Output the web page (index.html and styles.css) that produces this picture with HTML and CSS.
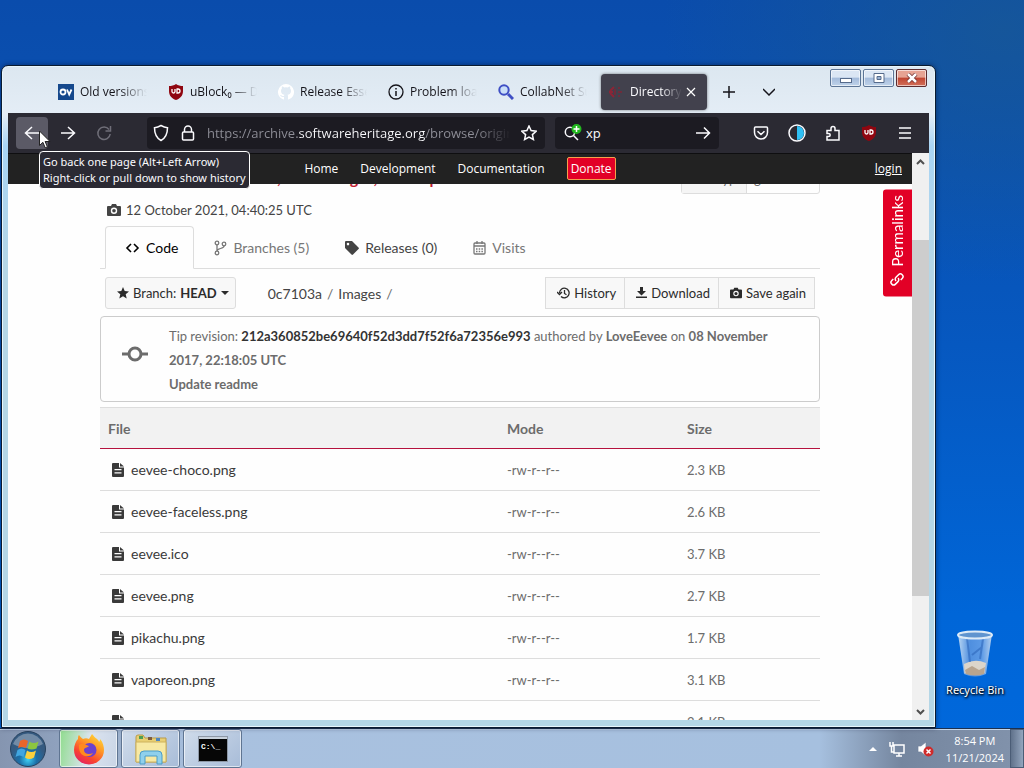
FILE: index.html
```html
<!DOCTYPE html>
<html lang="en">
<head>
    <meta charset="UTF-8">
    <meta name="viewport" content="width=device-width, initial-scale=1.0">
    <title>Directory - Software Heritage archive</title>
    <link rel="stylesheet" href="styles.css">
</head>
<body>
    <!-- Shared icons -->
    <svg class="sprite" aria-hidden="true">
        <symbol id="file" viewBox="0 0 12 14">
            <path fill="currentColor" fill-rule="evenodd" d="M1 0h6v4.500h5V13a1 1 0 0 1-1 1H1a1 1 0 0 1-1-1V1a1 1 0 0 1 1-1zm1.500 6v1.200h7V6zm0 3.200v1.200h7V9.200z"/>
            <path fill="currentColor" d="M8 0l4 3.600H8z"/>
        </symbol>
        <symbol id="camera" viewBox="0 0 14 12">
            <path fill="currentColor" fill-rule="evenodd" d="M1 2h3l1-2h4l1 2h3a1 1 0 0 1 1 1v8a1 1 0 0 1-1 1H1a1 1 0 0 1-1-1V3a1 1 0 0 1 1-1zm6 1.500a3.200 3.200 0 1 0 0 6.400 3.200 3.200 0 0 0 0-6.400z"/>
            <circle cx="7" cy="6.700" r="1.800" fill="currentColor"/>
        </symbol>
        <symbol id="shield" viewBox="0 0 16 16">
            <path fill="#8f0610" d="M8 0c2 1.500 4.500 2 7 2v5c0 5-3 7.500-7 9-4-1.500-7-4-7-9V2c2.500 0 5-.5 7-2z"/>
            <path fill="none" stroke="#fff" stroke-width="1.300" d="M4 5v2.500a1.500 1.500 0 0 0 3 0V5M9 5v4h1a2 2 0 0 0 0-4H8.500"/>
        </symbol>
    </svg>

    <div class="desktop">
        <!-- Browser window -->
        <div class="window">
            <div class="titlebar">
                <div class="tabs">
                    <div class="tab">
                        <svg width="16" height="16" viewBox="0 0 16 16"><rect width="16" height="16" fill="#15488c"/><circle cx="5" cy="8" r="2.500" fill="none" stroke="#fff" stroke-width="1.800"/><path d="M9 5.500l2.200 5 2.300-5" fill="none" stroke="#fff" stroke-width="1.800"/></svg>
                        <span>Old versions of Windows</span>
                    </div>
                    <div class="tab">
                        <svg width="16" height="16"><use href="#shield"/></svg>
                        <span>uBlock₀ — Dashboard</span>
                    </div>
                    <div class="tab">
                        <svg width="16" height="16" viewBox="0 0 16 16"><path fill="#fff" d="M8 0a8 8 0 0 0-2.500 15.600c.4 0 .5-.2.5-.4V13c-3 .5-3.500-1.500-4-2 1.500-.4 2 1.500 4 1 .1-.6.300-1 .5-1.200C4.500 10.500 3 9.500 3 7c0-1 .3-1.800.9-2.400-.2-.6-.1-1.500.1-2 1 0 1.500.5 2.200.9a8 8 0 0 1 3.600 0C10.500 3 11.200 2.600 12 2.600c.3.6.3 1.400.1 2 .6.600.9 1.400.9 2.400 0 2.500-1.500 3.500-3.500 3.800.5.500.5 1.200.5 1.800v2.600c0 .2.100.5.500.4A8 8 0 0 0 8 0z"/></svg>
                        <span>Release Essentials</span>
                    </div>
                    <div class="tab">
                        <svg width="16" height="16" viewBox="0 0 16 16" fill="none" stroke="#15141a"><circle cx="8" cy="8" r="7" stroke-width="1.300"/><path d="M8 7v5M8 4v1.600" stroke-width="1.500"/></svg>
                        <span>Problem loading page</span>
                    </div>
                    <div class="tab">
                        <svg width="16" height="16" viewBox="0 0 16 16" fill="none" stroke="#3f4fc4"><circle cx="6" cy="6" r="4.700" fill="#c9def8" stroke-width="2"/><path d="M10 10l5 5" stroke-width="3"/></svg>
                        <span>CollabNet Subversion</span>
                    </div>
                    <div class="tab active">
                        <svg width="16" height="16" viewBox="0 0 16 16" fill="none" stroke="#8c2536" stroke-width="2"><path d="M6 3L2 7M5 8H1M6 13l-4-4"/><path d="M11 3v2M10 8h4M11 11v2M7 5v6" stroke="#6e2c3c"/></svg>
                        <span>Directory - Images</span>
                        <button class="close-tab" aria-label="Close tab"><svg width="10" height="10" viewBox="0 0 10 10" stroke="#fff" stroke-width="1.200"><path d="M1 1l8 8M9 1l-8 8"/></svg></button>
                    </div>
                </div>
                <button class="tab-button" aria-label="New tab"><svg width="12" height="12" viewBox="0 0 12 12" stroke="#15141a" stroke-width="1.500"><path d="M6 0v12M0 6h12"/></svg></button>
                <button class="tab-button" aria-label="List all tabs"><svg width="12" height="12" viewBox="0 0 12 12" fill="none" stroke="#15141a" stroke-width="1.500"><path d="M0 3l6 6 6-6"/></svg></button>
                <div class="window-controls">
                    <button aria-label="Minimize"><svg width="12" height="10" viewBox="0 0 12 10"><rect x=".5" y="5.500" width="11" height="4" fill="#fff" stroke="#566b8c"/></svg></button>
                    <button aria-label="Maximize"><svg width="12" height="10" viewBox="0 0 12 10"><path d="M1 .5h10v9H1z" fill="#fff" stroke="#566b8c"/><path d="M4 3.500h4v3H4z" fill="#9bb3d4" stroke="#566b8c"/></svg></button>
                    <button class="close" aria-label="Close"><svg width="12" height="10" viewBox="0 0 12 10" fill="none"><path d="M2 1l8 8M10 1L2 9" stroke="#6b2a2a" stroke-width="4"/><path d="M2 1l8 8M10 1L2 9" stroke="#fff" stroke-width="2.500"/></svg></button>
                </div>
            </div>

            <div class="toolbar">
                <button class="tool back" aria-label="Back"><svg width="16" height="16" viewBox="0 0 16 16"><path d="M15 8H1.500M8 2L1.500 8 8 14"/></svg></button>
                <button class="tool" aria-label="Forward"><svg width="16" height="16" viewBox="0 0 16 16"><path d="M1 8h13.500M8 2l6.500 6L8 14"/></svg></button>
                <button class="tool disabled" aria-label="Reload"><svg width="16" height="16" viewBox="0 0 16 16"><path d="M13 4.500A6.200 6.200 0 1 0 14.200 9M14.500 1v5h-5"/></svg></button>
                <div class="field url">
                    <svg width="16" height="18" viewBox="0 0 16 18"><path d="M8 1.500c2 1.200 4 2 6.500 2.200 0 6-1.500 10-6.500 12.800C3 13.700 1.500 9.700 1.500 3.700 4 3.500 6 2.700 8 1.500z"/></svg>
                    <svg width="14" height="16" viewBox="0 0 14 16"><rect x="1.500" y="7" width="11" height="8" rx="1"/><path d="M3.500 7V4.500a3.500 3.500 0 0 1 7 0V7"/></svg>
                    <input type="text" class="url-input" aria-label="Address" value="https://archive.softwareheritage.org/browse/origin/directory/">
                    <svg width="16" height="16" viewBox="0 0 16 16"><path d="M8 1l2.100 4.600 5 .6-3.700 3.400 1 4.900L8 12l-4.400 2.500 1-4.900L.9 6.200l5-.6z"/></svg>
                </div>
                <div class="field search">
                    <svg width="18" height="18" viewBox="0 0 18 18"><circle cx="6" cy="8" r="4.700"/><path d="M9.500 11.500L14 16"/><circle cx="12.500" cy="5" r="5" fill="#22b81e" stroke="none"/><path d="M12.500 2v6M9.500 5h6" stroke="#fff"/></svg>
                    <input type="text" aria-label="Search" value="xp">
                    <svg width="16" height="16" viewBox="0 0 16 16"><path d="M1 8h13.500M9 2.500L14.500 8 9 13.500"/></svg>
                </div>
                <button class="tool" aria-label="Pocket"><svg width="16" height="16" viewBox="0 0 16 16"><path d="M2.500 2h11c.6 0 1 .4 1 1v4.500a6.500 6.500 0 0 1-13 0V3c0-.6.400-1 1-1zM4.500 6.200L8 9.500l3.500-3.300"/></svg></button>
                <button class="tool" aria-label="Dark mode"><svg width="18" height="18" viewBox="0 0 18 18"><circle cx="9" cy="9" r="8"/><path d="M9 2a7 7 0 0 1 0 14z" fill="#2fc0f4" stroke="none"/></svg></button>
                <button class="tool" aria-label="Extensions"><svg width="16" height="16" viewBox="0 0 16 16"><path d="M2 5.500h4V3.500c0-2.700 4-2.700 4 0v2h4V15H2v-3.500h1.500c2.300 0 2.300-3 0-3H2z"/></svg></button>
                <button class="tool ublock" aria-label="uBlock Origin"><svg width="16" height="16"><use href="#shield"/></svg></button>
                <button class="tool" aria-label="Menu"><svg width="14" height="14" viewBox="0 0 14 14"><path d="M1 2h12M1 7h12M1 12h12"/></svg></button>
            </div>

            <div class="viewport">
                <div class="site">
                    <header class="site-header">
                        <nav>
                            <a href="#">Home</a>
                            <a href="#">Development</a>
                            <a href="#">Documentation</a>
                            <a href="#" class="donate">Donate</a>
                        </nav>
                        <a href="#" class="login">login</a>
                    </header>

                    <main class="scroller">
                        <div class="page">
                            <div class="origin">
                                <h1>LoveEevee/taiko-web-1, vault Images, desktop</h1>
                                <div class="visit-type"><span>Visit type</span><span>git</span></div>
                            </div>
                            <p class="visit-date"><svg width="14" height="12"><use href="#camera"/></svg> 12 October 2021, 04:40:25 UTC</p>

                            <nav class="view-tabs">
                                <a href="#" class="current"><svg width="15" height="12" viewBox="0 0 15 12" fill="none" stroke="currentColor" stroke-width="1.600"><path d="M6 2L2 6l4 4M9 2l4 4-4 4"/></svg>Code</a>
                                <a href="#" class="muted"><svg width="13" height="16" viewBox="0 0 13 16" fill="none" stroke="currentColor" stroke-width="1.300"><circle cx="3" cy="3" r="1.800"/><circle cx="10" cy="4" r="1.800"/><circle cx="3" cy="13" r="1.800"/><path d="M3 5v6M10 6c0 3-7 2-7 5"/></svg>Branches (5)</a>
                                <a href="#"><svg width="14" height="14" viewBox="0 0 14 14"><path fill="currentColor" fill-rule="evenodd" d="M0 1a1 1 0 0 1 1-1h6l6.500 6.500a1 1 0 0 1 0 1.500L8 13.500a1 1 0 0 1-1.500 0L0 7zm3 .8a1.300 1.300 0 1 0 0 2.600 1.300 1.300 0 0 0 0-2.600z"/></svg>Releases (0)</a>
                                <a href="#" class="muted"><svg width="13" height="14" viewBox="0 0 13 14" fill="none" stroke="currentColor" stroke-width="1.300"><rect x="1" y="2" width="11" height="11" rx="1"/><path d="M1 5h11M4 0v3M9 0v3"/><path d="M3 8h7M3 10.500h7" stroke-dasharray="1.500 1.200"/></svg>Visits</a>
                            </nav>

                            <div class="actions">
                                <button class="btn branch"><svg width="12" height="12" viewBox="0 0 12 12"><path fill="currentColor" d="M6 0l1.700 4 4.300.4-3.300 2.800 1 4.300L6 9.200l-3.700 2.300 1-4.300L0 4.400 4.300 4z"/></svg>Branch: <b>HEAD</b><i class="caret"></i></button>
                                <div class="path"><a href="#">0c7103a</a> <span>/</span> <a href="#">Images</a> <span>/</span></div>
                                <div class="btn-group">
                                    <button class="btn"><svg width="13" height="12" viewBox="0 0 13 12" fill="none" stroke="currentColor" stroke-width="1.300"><path d="M2.500 6a4.800 4.800 0 1 1 1.500 3.500M0 5l2.500 2.500L5 5M7.500 3v3.500l2 1.200"/></svg>History</button>
                                    <button class="btn"><svg width="11" height="12" viewBox="0 0 11 12" fill="currentColor"><path d="M4 0h3v4h3L5.500 8.500 1 4h3zM0 9.500h11V11H0z"/></svg>Download</button>
                                    <button class="btn"><svg width="12" height="12"><use href="#camera"/></svg>Save again</button>
                                </div>
                            </div>

                            <section class="revision">
                                <svg width="28" height="16" viewBox="0 0 28 16" fill="none" stroke="#6c6c6c" stroke-width="3"><circle cx="14" cy="8" r="6"/><path d="M1 8h7M20 8h7"/></svg>
                                <div>
                                    <p>Tip revision: <a href="#">212a360852be69640f52d3dd7f52f6a72356e993</a> authored by <b>LoveEevee</b> on <b>08 November 2017, 22:18:05 UTC</b></p>
                                    <p><b>Update readme</b></p>
                                </div>
                            </section>

                            <table class="files">
                                <thead>
                                    <tr><th class="col-file">File</th><th class="col-mode">Mode</th><th>Size</th></tr>
                                </thead>
                                <tbody>
                                    <tr><td><a href="#"><svg width="12" height="14"><use href="#file"/></svg>eevee-choco.png</a></td><td>-rw-r--r--</td><td>2.3 KB</td></tr>
                                    <tr><td><a href="#"><svg width="12" height="14"><use href="#file"/></svg>eevee-faceless.png</a></td><td>-rw-r--r--</td><td>2.6 KB</td></tr>
                                    <tr><td><a href="#"><svg width="12" height="14"><use href="#file"/></svg>eevee.ico</a></td><td>-rw-r--r--</td><td>3.7 KB</td></tr>
                                    <tr><td><a href="#"><svg width="12" height="14"><use href="#file"/></svg>eevee.png</a></td><td>-rw-r--r--</td><td>2.7 KB</td></tr>
                                    <tr><td><a href="#"><svg width="12" height="14"><use href="#file"/></svg>pikachu.png</a></td><td>-rw-r--r--</td><td>1.7 KB</td></tr>
                                    <tr><td><a href="#"><svg width="12" height="14"><use href="#file"/></svg>vaporeon.png</a></td><td>-rw-r--r--</td><td>3.1 KB</td></tr>
                                    <tr><td><a href="#"><svg width="12" height="14"><use href="#file"/></svg>zorua.png</a></td><td>-rw-r--r--</td><td>2.1 KB</td></tr>
                                </tbody>
                            </table>
                        </div>
                    </main>
                    <a href="#" class="permalinks"><svg width="14" height="14" viewBox="0 0 14 14" fill="none" stroke="#fff" stroke-width="1.500"><path d="M6 8.500a2.600 2.600 0 0 1 0-3.700l2.500-2.500a2.600 2.600 0 0 1 3.700 3.700l-1.500 1.500M8 5.500a2.600 2.600 0 0 1 0 3.700l-2.500 2.500a2.600 2.600 0 0 1-3.700-3.700l1.500-1.500"/></svg>Permalinks</a>
                </div>

                <div class="scrollbar">
                    <svg width="9" height="6" viewBox="0 0 9 6"><path d="M1 5l3.500-3.500L8 5"/></svg>
                    <div class="track"><div class="thumb"></div></div>
                    <svg width="9" height="6" viewBox="0 0 9 6"><path d="M1 1l3.500 3.500L8 1"/></svg>
                </div>
            </div>

            <div class="tooltip" role="tooltip">Go back one page (Alt+Left Arrow)<br>Right-click or pull down to show history</div>
            <svg class="cursor" width="12" height="19" viewBox="0 0 12 19"><path d="M.5 1v14.500l3.400-3.200 2.300 5.500 2.200-1-2.300-5.300h4.900z" fill="#fff" stroke="#222"/></svg>
        </div>

        <!-- Desktop icon -->
        <div class="recycle-bin">
            <svg width="40" height="48" viewBox="0 0 40 48">
                <defs><linearGradient id="glass" x2="1"><stop offset="0" stop-color="#b9d6f3"/><stop offset=".35" stop-color="#4f8fdf"/><stop offset=".7" stop-color="#5c9ae6"/><stop offset="1" stop-color="#b4cfee"/></linearGradient></defs>
                <path d="M3 4h34l-6 40q-11 5-22 0z" fill="url(#glass)"/>
                <path d="M9 34q11-6 22-1l-1.500 10q-10 4-20 0z" fill="#dcd5ca"/>
                <path d="M10 40l7-4 7 4 6-3-1 7q-9 3-18 0z" fill="#b8a48e"/>
                <path d="M12 8l3 24M28 9l-3 20M17 25l10-8" stroke="#2e68ba" stroke-width="2" fill="none" opacity=".6"/>
                <ellipse cx="20" cy="5" rx="17" ry="3.500" fill="#5f94cf" stroke="#dceaf7" stroke-width="2"/>
            </svg>
            <span>Recycle Bin</span>
        </div>
    </div>

    <!-- Taskbar -->
    <footer class="taskbar">
        <button class="start" aria-label="Start">
            <svg width="38" height="38" viewBox="0 0 38 38">
                <defs><radialGradient id="orb" cy=".8"><stop offset="0" stop-color="#3fd0f4"/><stop offset=".5" stop-color="#1b6fa8"/><stop offset="1" stop-color="#355a80"/></radialGradient></defs>
                <circle cx="19" cy="19" r="17.500" fill="url(#orb)" stroke="#28425e"/>
                <path d="M4 14a16 16 0 0 1 30 0q-15 8-30 0z" fill="#fff" opacity=".3"/>
                <path d="M11 11q4-3 8 0l-2 7q-4-2-8 0z" fill="#e8662a"/>
                <path d="M20.500 11.500q4 3 9 0l-2 7q-5 2-9 0z" fill="#8cc63f"/>
                <path d="M8.500 20q4-3 8 0l-2 7q-4-3-8 0z" fill="#41a6e0"/>
                <path d="M18 20.500q4 3 9 0l-2 7q-5 3-9 0z" fill="#fbd13d"/>
            </svg>
        </button>
        <button class="task firefox" aria-label="Firefox">
            <svg width="32" height="32" viewBox="0 0 32 32">
                <defs><linearGradient id="fox" x1=".9" y1="0" x2=".3" y2="1"><stop offset="0" stop-color="#ffe23e"/><stop offset=".4" stop-color="#ff9a26"/><stop offset=".75" stop-color="#f9442f"/><stop offset="1" stop-color="#e32462"/></linearGradient></defs>
                <path d="M19 1c2 2 3 4 5 5 1 1 2 2 2 3 1-1 1-2 1-3 3 3 4 8 4 11a15 14.500 0 0 1-30 0C1 12 3 8 5 6c0-2 0-3 1-4 1 1 2 3 4 4 2-1 4-1 6 0 1-2 2-3 3-5z" fill="url(#fox)"/>
                <circle cx="16.500" cy="17" r="7" fill="#6b42cf"/>
                <path d="M6 12c4-3 7 0 10 1-1 2-5 1-5 4 0 4 5 5 9 3-2 4-10 5-13-1-1-2-1-5-1-7z" fill="#ff8a1f"/>
            </svg>
        </button>
        <button class="task" aria-label="Windows Explorer">
            <svg width="34" height="32" viewBox="0 0 34 32">
                <path d="M2 4q0-2 2-2h5l2 3h21v24H2z" fill="#e9cf73" stroke="#b99b4a"/>
                <path d="M5 3h4v3H5z" fill="#4c9e54"/><path d="M14 4h4v3h-4z" fill="#7d5b3f"/><path d="M22 5h4v3h-4z" fill="#4f86bf"/>
                <path d="M2 9h30v20H2z" fill="#f7e9a4" stroke="#cdb25f"/>
                <path d="M6 31v-9q0-4 4-4h14q4 0 4 4v9h-5v-8H11v8z" fill="#8fd0ec" stroke="#4a9cc7"/>
            </svg>
        </button>
        <button class="task" aria-label="Command Prompt">
            <svg width="30" height="26" viewBox="0 0 30 26"><rect x=".5" y=".5" width="29" height="25" fill="#060606" stroke="#8e98a6"/><rect x="1" y="1" width="28" height="2" fill="#c9d2dc"/><text x="3" y="13" class="prompt">C:\_</text></svg>
        </button>
        <div class="tray">
            <svg width="8" height="5" viewBox="0 0 8 5"><path d="M0 5l4-4 4 4z" fill="#fff"/></svg>
            <svg width="16" height="16" viewBox="0 0 16 16" fill="none" stroke="#fff" stroke-width="1.500"><path d="M5 4h10v8H5zM7 15h6M10 12v3M1 1v4h3V1M2.500 5v6H5"/></svg>
            <svg width="17" height="16" viewBox="0 0 17 16"><path d="M1 5h3l5-4v14l-5-4H1z" fill="#fff" stroke="#71839c" stroke-width=".7"/><circle cx="11.500" cy="10.500" r="5" fill="#cf2b2b"/><path d="M9.500 8.500l4 4M13.500 8.500l-4 4" stroke="#fff" stroke-width="1.500"/></svg>
            <time class="clock">8:54 PM<br>11/21/2024</time>
        </div>
        <button class="show-desktop" aria-label="Show desktop"></button>
    </footer>
</body>
</html>
```
FILE: styles.css
```css
* {
    box-sizing: border-box;
}

body {
    margin: 0;
    height: 100vh;
    display: flex;
    flex-direction: column;
    overflow: hidden;
    font-family: "Open Sans", sans-serif;
    font-size: 12px;
    background: radial-gradient(ellipse at 98% 4%, rgba(24, 88, 150, 0.8), transparent 24%),
        linear-gradient(180deg, #0a4cac 0%, #0a50b0 15%, #0658c0 45%, #0066d8 80%, #0068dc 100%);
}

button,
input {
    font: inherit;
    color: inherit;
}

button {
    display: flex;
    align-items: center;
    justify-content: center;
    padding: 0;
    border: none;
    background: none;
}

svg {
    display: block;
    flex: none;
}

a {
    color: inherit;
    text-decoration: none;
}

.sprite {
    position: absolute;
    width: 0;
    height: 0;
}

.desktop {
    flex: 1;
    position: relative;
    min-height: 0;
}

/* Browser window */
.window {
    position: absolute;
    top: 65px;
    left: 1px;
    right: 88px;
    bottom: 0;
    display: flex;
    flex-direction: column;
    padding: 0 6px 7px;
    border: 1px solid #0b1b30;
    border-radius: 7px 7px 0 0;
    background: linear-gradient(180deg, #dce7f0, #e4edf6 48px, #a9d4f4 80px, #b4d6e6 200px);
    box-shadow: inset 0 0 0 1px #e8f6fc, 0 0 5px rgba(0, 10, 40, 0.5);
}

.titlebar {
    flex: none;
    height: 47px;
    display: flex;
    align-items: center;
    padding: 5px 0 1px 41px;
    color: #15141a;
}

.tabs {
    display: flex;
}

.tab {
    width: 106px;
    height: 36px;
    margin: 0 2px;
    padding: 0 10px 0 7px;
    display: flex;
    align-items: center;
    gap: 6px;
    border-radius: 4px;
}

.tab span {
    flex: 1;
    overflow: hidden;
    white-space: nowrap;
    -webkit-mask-image: linear-gradient(90deg, #000 60%, transparent);
    mask-image: linear-gradient(90deg, #000 60%, transparent);
}

.tab.active {
    padding-right: 7px;
    background: #42414d;
    color: #fbfbfe;
    box-shadow: 0 0 3px rgba(0, 0, 0, 0.5);
}

.close-tab {
    width: 18px;
    height: 18px;
    margin-left: -6px;
}

.tab-button {
    width: 40px;
    height: 36px;
}

.window-controls {
    display: flex;
    align-self: flex-start;
    gap: 2px;
    margin: -2px 2px 0 auto;
}

.window-controls button {
    width: 31px;
    height: 18px;
    border: 1px solid #5c7596;
    border-radius: 2px;
    background: linear-gradient(180deg, #dbe6f4 45%, #a4bbdb 50%, #bfd3ea);
    box-shadow: inset 0 0 0 1px rgba(255, 255, 255, 0.6);
}

.window-controls .close {
    border-color: #5b2c30;
    background: linear-gradient(180deg, #e6a393 45%, #c04531 50%, #d2705a);
}

.toolbar {
    flex: none;
    height: 40px;
    display: flex;
    align-items: center;
    gap: 4px;
    padding: 0 8px;
    background: #2b2a33;
    color: #fbfbfe;
}

.toolbar svg {
    fill: none;
    stroke: currentColor;
    stroke-width: 1.5;
}

.tool {
    width: 32px;
    height: 32px;
    border-radius: 4px;
}

.tool.back {
    background: #5b5a66;
}

.tool.disabled {
    color: #6f6e78;
}

.tool.ublock svg {
    stroke: none;
}

.field {
    height: 32px;
    display: flex;
    align-items: center;
    gap: 12px;
    padding: 0 8px 0 6px;
    border-radius: 4px;
    background: #1c1b22;
    font-size: 13px;
}

.field input {
    flex: 1;
    min-width: 0;
    padding: 0;
    border: none;
    outline: none;
    background: none;
}

.field.url {
    flex: 1;
    margin: 0 6px 0 23px;
}

.field .url-input {
    color: transparent;
    background: linear-gradient(90deg, #8f8f98 91px, #fbfbfe 91px, #fbfbfe 218px, #8f8f98 218px, #8f8f98 270px, transparent 304px);
    -webkit-background-clip: text;
    background-clip: text;
}

.field.search {
    width: 164px;
    margin-right: 22px;
    gap: 4px;
    padding-left: 9px;
}

.viewport {
    flex: 1;
    display: flex;
    min-height: 0;
}

/* Archive site */
.site {
    flex: 1;
    min-width: 0;
    display: flex;
    flex-direction: column;
    position: relative;
    background: #fefefe;
    color: #6c6c6c;
    font-family: Lato, sans-serif;
    font-size: 14px;
}

.site-header {
    flex: none;
    height: 31px;
    display: grid;
    grid-template-columns: 1fr auto 1fr;
    align-items: center;
    padding: 0 10px 2px;
    background: #222;
    border-top: 1px solid #0e0e10;
    color: #fff;
    font-family: "Open Sans", sans-serif;
    font-size: 12px;
}

.site-header nav {
    grid-column: 2;
    display: flex;
    align-items: center;
    gap: 22px;
}

.site-header .donate {
    padding: 2px 3px;
    border: 1px solid #f5a04c;
    border-radius: 2px;
    background: #e20026;
}

.site-header .login {
    justify-self: end;
    text-decoration: underline;
}

.scroller {
    flex: 1;
    min-height: 0;
    overflow: hidden;
}

.page {
    max-width: 720px;
    margin: -20px auto 0;
}

.origin {
    height: 30px;
    display: flex;
    justify-content: space-between;
}

.origin h1 {
    margin: 0 0 0 7px;
    color: #c01c33;
    font-size: 16px;
    line-height: 28px;
}

.visit-type {
    display: flex;
    border: 1px solid #ddd;
    border-radius: 3px;
    font-size: 13px;
    line-height: 28px;
    white-space: nowrap;
}

.visit-type span {
    width: 72px;
    padding-left: 7px;
}

.visit-type span:first-child {
    width: 65px;
    background: #f5f5f5;
    border-right: 1px solid #ddd;
}

.visit-date {
    display: flex;
    align-items: center;
    gap: 5px;
    height: 32px;
    margin: 0 0 0 7px;
    color: #444;
    font-size: 13px;
}

.view-tabs {
    display: flex;
    height: 43px;
    padding-left: 5px;
    border-bottom: 1px solid #ddd;
}

.view-tabs a {
    display: flex;
    align-items: center;
    gap: 6px;
    padding: 0 15px 0 19px;
    margin-bottom: -1px;
    border: 1px solid transparent;
    color: #444;
}

.view-tabs .current {
    border-color: #ddd #ddd #fefefe;
    border-radius: 4px 4px 0 0;
    background: #fefefe;
    color: #000;
}

.view-tabs .muted {
    color: #777;
}

.actions {
    display: flex;
    align-items: center;
    padding: 8px 5px 7px;
}

.btn {
    height: 32px;
    gap: 4px;
    padding: 0 8px 0 11px;
    border: 1px solid #ddd;
    border-radius: 3px;
    background: #f8f8f8;
    color: #2b2b2b;
    font-size: 13px;
}

.branch {
    padding-right: 6px;
}

.caret {
    border: 4px solid transparent;
    border-top-color: currentColor;
    border-bottom: none;
}

.path {
    display: flex;
    gap: 5px;
    margin-left: 32px;
}

.path a {
    color: #444;
}

.btn-group {
    display: flex;
    margin-left: auto;
}

.btn-group .btn {
    margin-left: -1px;
    border-radius: 0;
}

.revision {
    display: flex;
    align-items: center;
    gap: 20px;
    padding: 7px 20px 5px;
    border: 1px solid #ccc;
    border-radius: 4px;
    font-size: 13px;
    line-height: 24px;
}

.revision svg {
    margin-top: -12px;
}

.revision p {
    margin: 0;
}

.revision a {
    color: #333;
    font-weight: bold;
}

.files {
    width: 100%;
    margin-top: 5px;
    border-collapse: separate;
    border-spacing: 0;
    table-layout: fixed;
}

.files th,
.files td {
    height: 42px;
    padding: 0 8px;
    border-bottom: 1px solid #ddd;
    text-align: left;
}

.files th {
    background: #f2f2f2;
    border-top: 1px solid #ddd;
    border-bottom: 1px solid #b5123e;
}

.files td {
    font-size: 13px;
}

.files td a {
    display: flex;
    align-items: center;
    gap: 7px;
    padding-left: 4px;
    color: #3a3a3a;
    font-size: 14px;
}

.col-file {
    width: 399px;
}

.col-mode {
    width: 25%;
}

/* Stays pinned to the side of the page */
.permalinks {
    position: absolute;
    top: 36px;
    right: 0;
    display: flex;
    align-items: center;
    gap: 6px;
    padding: 10px 7px 6px;
    border-radius: 0 3px 3px 0;
    background: #e20026;
    color: #fff;
    font-size: 15px;
    line-height: 15px;
    writing-mode: vertical-rl;
    transform: rotate(180deg);
}

.scrollbar {
    width: 17px;
    display: flex;
    flex-direction: column;
    align-items: center;
    justify-content: space-between;
    padding: 6px 0 5px;
    background: #f0f0f0;
}

.scrollbar svg {
    fill: none;
    stroke: #505050;
    stroke-width: 2;
}

.track {
    flex: 1;
    align-self: stretch;
    padding: 75px 0 113px;
}

.thumb {
    height: 100%;
    background: #cdcdcd;
}

.tooltip {
    position: absolute;
    top: 85px;
    left: 37px;
    padding: 2px 3px;
    border: 1px solid #fff;
    border-radius: 4px;
    background: #2b2a33;
    color: #fbfbfe;
    font-family: "Noto Sans", sans-serif;
    font-size: 11px;
    line-height: 16px;
    white-space: nowrap;
}

.cursor {
    position: absolute;
    top: 64px;
    left: 37px;
}

.recycle-bin {
    position: absolute;
    right: 15px;
    bottom: 30px;
    display: flex;
    flex-direction: column;
    align-items: center;
    gap: 4px;
    width: 68px;
    color: #fff;
    font-family: "Noto Sans", sans-serif;
    font-size: 11px;
    line-height: 16px;
    white-space: nowrap;
    text-shadow: 0 1px 3px #000, 1px 1px 2px #000;
}

/* Taskbar */
.taskbar {
    flex: none;
    height: 40px;
    display: flex;
    align-items: center;
    gap: 3px;
    border-top: 1px solid #1c3150;
    background: linear-gradient(90deg, #8595b0, #a9c1df 20%, #a6c0df 80%, #75869f 88%, #8293ac);
    box-shadow: inset 0 1px 0 #c4d6ea;
}

.start {
    width: 56px;
}

.task {
    width: 59px;
    height: 39px;
    border: 1px solid #5f7592;
    border-radius: 3px;
    background: linear-gradient(135deg, #d0dceb, #a8bcd8);
    box-shadow: inset 0 0 0 1px rgba(255, 255, 255, 0.6);
}

.task.firefox {
    background: linear-gradient(100deg, #8fdc8d, #dbe3ef 50%, #c9d5e6);
}

.prompt {
    fill: #fff;
    font: bold 8px "Liberation Mono", monospace;
}

.tray {
    display: flex;
    align-items: center;
    gap: 12px;
    margin-left: auto;
    color: #fff;
}

.clock {
    font-size: 11px;
    line-height: 17px;
    text-align: center;
}

.show-desktop {
    width: 14px;
    height: 39px;
    margin-left: 3px;
    border: 1px solid #4b5d76;
    background: linear-gradient(90deg, #60728b, #93a5bd);
}
```
